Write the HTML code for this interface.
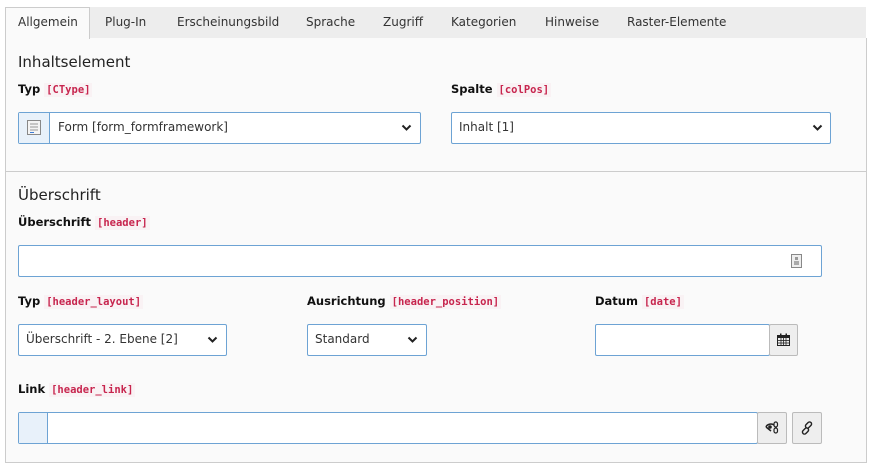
<!DOCTYPE html>
<html><head><meta charset="utf-8"><style>
*{box-sizing:border-box;margin:0;padding:0}
body{width:874px;height:468px;background:#fff;font-family:"DejaVu Sans","Liberation Sans",sans-serif;color:#212121;position:relative;overflow:hidden}
.a{position:absolute}
.tabs{left:5px;top:7px;width:861px;height:32px;background:#ededed;border-bottom:1px solid #ccc}
.tab{position:absolute;top:15px;font-size:12px;color:#333}
.act{left:5px;top:7px;width:85px;height:32px;background:#fafafa;border:1px solid #ccc;border-bottom:none}
.panel{left:5px;top:38px;width:862px;height:425px;background:#fafafa;border:1px solid #ccc;border-top:none}
.h{font-size:15px;color:#222}
.lbl{font-size:11.5px;font-weight:bold;color:#111}
.lbl code{font-family:"DejaVu Sans Mono","Liberation Mono",monospace;font-size:10.5px;color:#c7254e;background:#f9f2f4;font-weight:bold;padding:1px 2px}
.in{background:#fff;border:1px solid #6da3d4;border-radius:2px}
.sel{font-size:12px;color:#333;padding-left:7px;line-height:29px}
.btn{background:#eee;border:1px solid #bbb;border-radius:2px}
</style></head><body>
<div class="a tabs"></div>
<div class="a panel"></div>
<div class="a act"></div>
<div class="tab" style="left:18px">Allgemein</div>
<div class="tab" style="left:105px">Plug-In</div>
<div class="tab" style="left:177px">Erscheinungsbild</div>
<div class="tab" style="left:306px">Sprache</div>
<div class="tab" style="left:383px">Zugriff</div>
<div class="tab" style="left:451px">Kategorien</div>
<div class="tab" style="left:545px">Hinweise</div>
<div class="tab" style="left:627px">Raster-Elemente</div>

<div class="a h" style="left:18px;top:53px">Inhaltselement</div>
<div class="a lbl" style="left:18px;top:82px">Typ <code>[CType]</code></div>
<div class="a lbl" style="left:451px;top:82px">Spalte <code>[colPos]</code></div>
<div class="a in" style="left:18px;top:112px;width:403px;height:32px"></div>
<div class="a" style="left:19px;top:113px;width:31px;height:30px;background:#e8f1fa;border-right:1px solid #6da3d4"></div>
<svg class="a" style="left:27px;top:120px" width="14" height="15"><rect x="0.5" y="0.5" width="13" height="14" fill="#f4f4f4" stroke="#888"/><g stroke="#999"><line x1="3" y1="4" x2="11" y2="4"/><line x1="3" y1="7" x2="11" y2="7"/><line x1="3" y1="10" x2="11" y2="10"/></g><line x1="3" y1="12.5" x2="7" y2="12.5" stroke="#3a7bd5"/></svg>
<div class="a sel" style="left:51px;top:113px">Form [form_formframework]</div>
<svg class="a" style="left:401px;top:124px" width="11" height="8"><path d="M1.5 1.5L5.5 5.5L9.5 1.5" stroke="#222" stroke-width="2" fill="none"/></svg>
<div class="a in sel" style="left:451px;top:112px;width:380px;height:32px">Inhalt [1]</div>
<svg class="a" style="left:812px;top:124px" width="11" height="8"><path d="M1.5 1.5L5.5 5.5L9.5 1.5" stroke="#222" stroke-width="2" fill="none"/></svg>

<div class="a" style="left:6px;top:171px;width:860px;height:1px;background:#ccc"></div>
<div class="a h" style="left:18px;top:186px">Überschrift</div>
<div class="a lbl" style="left:18px;top:215px">Überschrift <code>[header]</code></div>
<div class="a in" style="left:18px;top:245px;width:804px;height:32px"></div>
<svg class="a" style="left:791px;top:254px" width="11" height="14"><rect x="0.5" y="0.5" width="10" height="13" fill="#eee" stroke="#888"/><rect x="4" y="3" width="3" height="3" fill="#999"/><rect x="3" y="7" width="5" height="4" fill="#aaa"/></svg>

<div class="a lbl" style="left:18px;top:294px">Typ <code>[header_layout]</code></div>
<div class="a lbl" style="left:307px;top:294px">Ausrichtung <code>[header_position]</code></div>
<div class="a lbl" style="left:595px;top:294px">Datum <code>[date]</code></div>
<div class="a in sel" style="left:18px;top:324px;width:209px;height:32px">Überschrift - 2. Ebene [2]</div>
<svg class="a" style="left:207px;top:336px" width="11" height="8"><path d="M1.5 1.5L5.5 5.5L9.5 1.5" stroke="#222" stroke-width="2" fill="none"/></svg>
<div class="a in sel" style="left:307px;top:324px;width:120px;height:32px">Standard</div>
<svg class="a" style="left:407px;top:336px" width="11" height="8"><path d="M1.5 1.5L5.5 5.5L9.5 1.5" stroke="#222" stroke-width="2" fill="none"/></svg>
<div class="a in" style="left:595px;top:324px;width:175px;height:32px"></div>
<div class="a btn" style="left:769px;top:324px;width:29px;height:32px"></div>
<svg class="a" style="left:777px;top:333px" width="13" height="13"><rect x="0.5" y="2.5" width="12" height="10" fill="none" stroke="#222"/><rect x="0.5" y="2.5" width="12" height="2.5" fill="#222"/><g stroke="#222" stroke-width="0.8"><line x1="4" y1="5" x2="4" y2="12"/><line x1="6.5" y1="5" x2="6.5" y2="12"/><line x1="9" y1="5" x2="9" y2="12"/><line x1="1" y1="7.5" x2="12" y2="7.5"/><line x1="1" y1="10" x2="12" y2="10"/></g><rect x="3" y="0.5" width="1.5" height="3" fill="#222"/><rect x="8.5" y="0.5" width="1.5" height="3" fill="#222"/></svg>

<div class="a lbl" style="left:18px;top:382px">Link <code>[header_link]</code></div>
<div class="a in" style="left:18px;top:412px;width:740px;height:32px"></div>
<div class="a" style="left:19px;top:413px;width:29px;height:30px;background:#e8f1fa;border-right:1px solid #6da3d4"></div>
<div class="a btn" style="left:757px;top:412px;width:30px;height:32px"></div>
<svg class="a" style="left:765px;top:420px" width="14" height="16"><path d="M1 7a5 4 0 0 1 8-2M1 7l5 4" stroke="#222" stroke-width="1.5" fill="none"/><circle cx="5" cy="7" r="1.8" fill="#222"/><rect x="9" y="2" width="3.5" height="5" rx="1.7" fill="none" stroke="#222" stroke-width="1.2"/><rect x="9" y="8" width="3.5" height="5" rx="1.7" fill="none" stroke="#222" stroke-width="1.2"/></svg>
<div class="a btn" style="left:792px;top:412px;width:30px;height:32px"></div>
<svg class="a" style="left:800px;top:421px" width="14" height="14"><g fill="none" stroke="#222" stroke-width="1.4"><rect x="6.5" y="0.5" width="4" height="7" rx="2" transform="rotate(45 8.5 4)"/><rect x="3.5" y="6.5" width="4" height="7" rx="2" transform="rotate(45 5.5 10)"/></g></svg>
</body></html>
